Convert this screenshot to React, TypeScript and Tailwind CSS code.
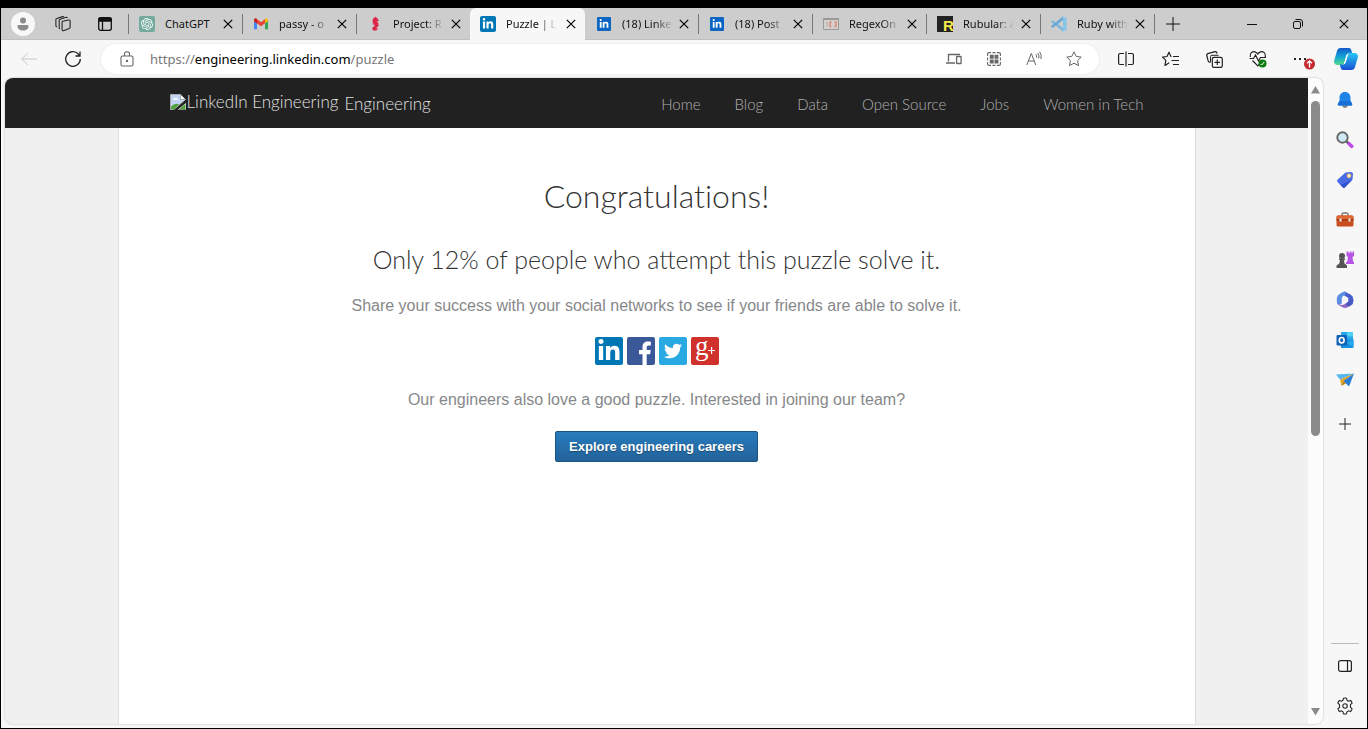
import React from "react";
import { FaLinkedinIn, FaTwitter } from "react-icons/fa";
import { SiOpenai } from "react-icons/si";

type Tab = { title: string; icon: React.ReactNode; active?: boolean };

const LinkedInMark = ({ tone }: { tone: "teal" | "blue" }) => (
  <span
    className={
      tone === "teal"
        ? "flex size-4 items-center justify-center rounded-[2px] bg-[#0077b5] text-white"
        : "flex size-3.5 items-center justify-center rounded-[1px] bg-[#0a66c2] text-white"
    }
  >
    <FaLinkedinIn className={tone === "teal" ? "size-3" : "size-2.5"} />
  </span>
);

const GmailMark = () => (
  <svg viewBox="0 0 16 16" className="size-4">
    <path d="M1 5v8.2h3V7z" fill="#4285f4" />
    <path d="M12 7v6.2h3V5z" fill="#34a853" />
    <path d="M4 7.2 1 5V4c0-1.4 1.5-1.9 2.5-1.2L8 6.2l4.500-3.400L12 7.200 8 10.200z" fill="#ea4335" />
    <path d="M12 7.200 15 5V4c0-1.400-1.500-1.900-2.500-1.200L12 3.200z" fill="#fbbc04" />
    <path d="M1 4v1.200l3 2.200V3.200l-.5-.4C2.500 2.100 1 2.600 1 4z" fill="#c5221f" />
  </svg>
);

const SeahorseMark = () => (
  <svg viewBox="0 0 16 16" className="size-4" fill="#dc2649">
    <path d="M8 .5 9 1.500c1.400.2 2 1.200 1.700 2L12 4.400l-.7.900-2-.3c1.700 1 2.400 2.500 2 4l.9.700-1.300.5c-.5 1-1.400 1.600-2.300 2 .5.300 1 .300 1.400-.1l.8.900c-.8 1.600-3.600 2.200-4.900 1-1-1-.6-2.300.3-3C7.300 10.200 8 9.500 7.700 8.700L5.500 8.500l1-.8-1.300-.9 1.200-.4L5 5.300l1-.3-.7-1.200.9-.2-.3-1.200 1.200-.2z" />
  </svg>
);

const RegexMark = () => (
  <svg viewBox="0 0 16 16" className="size-4" fill="none">
    <path d="M.5 2.500h15v11H.5z" stroke="#999" fill="#d4d0ce" />
    <path d="M.5 3h15" stroke="#999" strokeWidth="2" />
    <path d="m3 6 2 2.300-2 2.200" stroke="#aaa" />
    <path d="M8.500 6H7v4.500h1.500M11.500 6H13v4.500h-1.500" stroke="#dd8a78" strokeWidth="1.400" />
  </svg>
);

const RubularMark = () => (
  <svg viewBox="0 0 16 16" className="size-4">
    <path d="M0 0h16v16H0z" fill="#222" />
    <text x="6" y="15" fontSize="15" fontWeight="700" fontFamily="Liberation Sans Narrow, Liberation Sans, sans-serif" fill="#f4e84c">
      R
    </text>
  </svg>
);

const CodeMark = () => (
  <svg viewBox="0 0 16 16" className="size-4">
    <path d="m.3 5 1.200-1L12 12v3.500L.3 6z" fill="#7fb5da" />
    <path d="m.3 11 1.200 1L12 4V.5L.3 10z" fill="#69a8d3" />
    <path d="M11.500.2 15.500 2v12l-4 1.800-.8-.6L12 14V2L10.700.8z" fill="#88c4e8" />
  </svg>
);

const tabs: Tab[] = [
  {
    title: "ChatGPT",
    icon: (
      <span className="flex size-4 items-center justify-center rounded-[2px] bg-[#74aa9c] text-white">
        <SiOpenai className="size-3" />
      </span>
    ),
  },
  { title: "passy - o", icon: <GmailMark /> },
  { title: "Project: R", icon: <SeahorseMark /> },
  { title: "Puzzle | L", icon: <LinkedInMark tone="teal" />, active: true },
  { title: "(18) Linke", icon: <LinkedInMark tone="blue" /> },
  { title: "(18) Post", icon: <LinkedInMark tone="blue" /> },
  { title: "RegexOn", icon: <RegexMark /> },
  { title: "Rubular: a", icon: <RubularMark /> },
  { title: "Ruby with", icon: <CodeMark /> },
];

const Cross = ({ className }: { className: string }) => (
  <svg viewBox="0 0 10 10" className={className} stroke="currentColor" strokeWidth="1.200">
    <path d="m.8.8 8.400 8.400M9.200.8.8 9.200" />
  </svg>
);

function BrowserTab({ title, icon, active }: Tab) {
  return (
    <div
      className={
        active
          ? "flex h-8 w-[115px] min-w-0 items-center rounded-t-md bg-[#f7f7f7]"
          : "flex h-5 w-[114px] min-w-0 items-center border-l border-[#777] [div.rounded-t-md+&]:w-[113px] [div.rounded-t-md+&]:border-transparent"
      }
    >
      <a href="#tab" className="flex min-w-0 flex-1 items-center gap-2.5 pl-2.5">
        <span className="flex w-4 shrink-0 justify-center">{icon}</span>
        <span
          className={
            title === "ChatGPT"
              ? "flex-1 text-[11px] leading-4 whitespace-nowrap text-[#111]"
              : "w-[54px] shrink-0 -mr-1.5 mask-r-from-60% mask-r-to-95% text-[11px] leading-4 whitespace-nowrap text-[#111]"
          }
        >
          {title}
        </span>
      </a>
      <button aria-label={`Close ${title}`} className="flex w-7 shrink-0 items-center justify-center">
        <Cross className="size-2.5" />
      </button>
    </div>
  );
}

function TabStrip() {
  return (
    <div className="flex h-8 shrink-0 items-center bg-[#cdcdcd] shadow-[inset_0_-1px_0_#c0c0c0]">
      <div className="flex w-[127px] shrink-0 items-center">
        <button aria-label="Profile" className="ml-2.5 flex size-6 items-center justify-center rounded-full bg-[#f8f8f8]">
          <svg viewBox="0 0 12 14" className="h-3.5 w-3" fill="#8a8a8a">
            <circle cx="6" cy="3.500" r="3" />
            <path d="M1.500 8h9q1 0 1 1c0 2.800-2.200 4.500-5.500 4.500S.5 11.800.5 9q0-1 1-1z" />
          </svg>
        </button>
        <button aria-label="Workspaces" className="ml-5 flex size-4 items-center justify-center">
          <svg viewBox="0 0 18 18" className="size-4 overflow-visible" fill="none" stroke="#222" strokeWidth="1.200">
            <path d="m8.500 6 7-1.500q1.500-.2 1.500 1.200v7q0 1-1 1.300l-6.500 2.500Q8 17 8 15.500V7q0-.8.500-1z" />
            <path d="M5.500 14.500q-.8-.3-.8-1.500V5q0-1 1-1.300L12.500 1.500q1.200-.2 1.500.8" />
            <path d="M2.300 12.500Q1 12 1 11V4.200q0-1 1-1.300L8.500.7q1-.2 1.500.6" />
          </svg>
        </button>
        <button aria-label="Tab actions" className="ml-6 flex size-5 items-center justify-center">
          <svg viewBox="0 0 14 14" className="size-3.5" fill="none" stroke="#111" strokeWidth="1.300">
            <rect x=".7" y=".7" width="12.600" height="12.600" rx="2" />
            <path d="M1 1.500h12v2.500H1z" fill="#111" />
            <path d="M4.500 4v9" />
          </svg>
        </button>
      </div>
      <div className="flex min-w-0 items-center">
        {tabs.map((tab) => (
          <BrowserTab key={tab.title} {...tab} />
        ))}
        <button aria-label="New tab" className="flex h-5 w-9 shrink-0 items-center justify-center border-l border-[#777]">
          <svg viewBox="0 0 14 14" className="size-3.5" stroke="#111">
            <path d="M7 0v14M0 7h14" />
          </svg>
        </button>
      </div>
      <div className="ml-auto flex shrink-0">
        <button aria-label="Minimize" className="flex h-8 w-[46px] items-center justify-center">
          <svg viewBox="0 0 10 10" className="size-2.5" stroke="#111">
            <path d="M0 5.500h10" />
          </svg>
        </button>
        <button aria-label="Restore" className="flex h-8 w-[46px] items-center justify-center">
          <svg viewBox="0 0 10 10" className="size-2.5" stroke="#111" fill="none">
            <rect x=".5" y="2.500" width="7" height="7" rx="1.500" />
            <path d="M2.500.5H7Q9.500.5 9.500 3v4.500" />
          </svg>
        </button>
        <button aria-label="Close window" className="flex h-8 w-[46px] items-center justify-center">
          <Cross className="size-2.5" />
        </button>
      </div>
    </div>
  );
}

function AddressBar() {
  return (
    <div className="flex h-[30px] min-w-0 flex-1 items-center rounded-full bg-white pl-[19px] shadow-[0_0_2px_#ddd]">
      <svg viewBox="0 0 14 16" className="h-4 w-3.5 shrink-0" fill="none" stroke="#666" strokeWidth="1.100">
        <rect x="1" y="5" width="12" height="10" rx="1.500" />
        <path d="M4.500 5V3Q4.500.8 7 .8T9.500 3v2" />
        <circle cx="7" cy="10" r=".6" fill="#666" />
      </svg>
      <a href="https://engineering.linkedin.com/puzzle" className="ml-4 flex-1 pt-0.5 text-[13px] text-[#777]">
        https://<span className="text-black">engineering.linkedin.com</span>/puzzle
      </a>
      <div className="mr-[5px] flex text-[#666]">
        <button aria-label="Open app" className="flex w-10 items-center justify-center">
          <svg viewBox="0 0 16 12" className="h-3 w-4" fill="none" stroke="currentColor" strokeWidth="1.300">
            <path d="M14 1.500H2.500v7M0 10h9" />
            <rect x="10.600" y="3.500" width="4.500" height="7" rx=".6" />
          </svg>
        </button>
        <button aria-label="Split apps" className="flex w-10 items-center justify-center">
          <svg viewBox="0 0 14 14" className="size-3.5" fill="none" stroke="currentColor" strokeWidth="1.100">
            <path d="M.6 4V2Q.6.6 2 .6h2M.6 10v2q0 1.400 1.400 1.400h2M13.400 4V2Q13.400.6 12 .6h-2M13.400 10v2q0 1.400-1.400 1.400h-2M5.500.6h3M5.500 13.400h3M.6 5.500v3M13.400 5.500v3" />
            <path d="M2.800 2.800h3.900v3.900H2.800zM7.500 2.800h3.900v3.900H7.500zM2.800 7.500h3.900v3.900H2.800zM7.500 7.500h3.900v3.900H7.500z" fill="currentColor" stroke="none" />
          </svg>
        </button>
        <button aria-label="Read aloud" className="flex w-10 items-center justify-center">
          <svg viewBox="0 0 16 16" className="size-4" fill="none" stroke="currentColor">
            <path d="M.8 14 5.300 2.500 9.800 14M2.400 10h5.800" />
            <path d="M9.800 3.300q1.300 1.500.7 3.400M11.700 2q2 2.500 1 5.500M13.600.8q2.500 3 1.300 7.200" />
          </svg>
        </button>
        <button aria-label="Add to favorites" className="flex w-10 items-center justify-center">
          <svg viewBox="0 0 16 16" className="size-4" fill="none" stroke="currentColor" strokeLinejoin="round">
            <path d="m8 .8 2.200 4.600 5 .7-3.600 3.500.9 5L8 12.200l-4.500 2.400.9-5L.8 6.100l5-.7z" />
          </svg>
        </button>
      </div>
    </div>
  );
}

const toolButton = "relative flex h-8 w-11 items-center justify-center";

function Toolbar() {
  return (
    <div className="flex h-[38px] shrink-0 items-center text-[#222]">
      <div className="flex w-[100px] shrink-0">
        <button aria-label="Back" className="ml-1.5 flex h-8 w-11 items-center justify-center text-[#c8c8c8]">
          <svg viewBox="0 0 16 14" className="h-3.5 w-4" fill="none" stroke="currentColor">
            <path d="M16 7H.8M7 .8.800 7 7 13.200" />
          </svg>
        </button>
        <button aria-label="Refresh" className="flex h-8 w-11 items-center justify-center">
          <svg viewBox="0 0 16 16" className="size-4" fill="none" stroke="currentColor" strokeWidth="1.300">
            <path d="M15.300 8A7.300 7.300 0 1 1 13.500 3.200L15 5M15 .5V5h-4.500" />
          </svg>
        </button>
      </div>
      <AddressBar />
      <div className="ml-[5px] flex shrink-0">
        <button aria-label="Split screen" className={toolButton}>
          <svg viewBox="0 0 16 16" className="size-4" fill="none" stroke="currentColor" strokeWidth="1.200">
            <path d="M6 2.500H2Q.6 2.500.6 4v8q0 1.500 1.400 1.500h4M10 2.500h4q1.400 0 1.400 1.500v8q0 1.500-1.400 1.500h-4M8 .5v15" />
          </svg>
        </button>
        <button aria-label="Favorites" className={toolButton}>
          <svg viewBox="0 0 17 16" className="h-4 w-[17px]" fill="none" stroke="currentColor" strokeWidth="1.200" strokeLinejoin="round">
            <path d="M9.500 5.500h-.6L7 1.200 5 5.500l-4.400.7 3.200 3.200-.8 5 4.200-2.600M11 5.500h6M9.500 9.500H17M11 13.500h6" />
          </svg>
        </button>
        <button aria-label="Collections" className={toolButton}>
          <svg viewBox="0 0 17 17" className="size-[17px]" fill="none" stroke="currentColor" strokeWidth="1.200">
            <path d="M3.800 11.500Q2.500 11 2.200 10L.8 4.500Q.5 3 1.800 2.600L9 .7q1.300-.2 1.700 1l.3 1" />
            <path d="M4.500 11.500V5.800q0-1.500 1.500-1.500h6.500" strokeWidth="1" />
            <rect x="6.300" y="6.300" width="10" height="10" rx="1.600" fill="#f7f7f7" />
            <path d="M11.300 8.500V14M8.500 11.300H14" />
          </svg>
        </button>
        <button aria-label="Browser essentials" className={toolButton}>
          <svg viewBox="0 0 18 18" className="size-[18px]" fill="none" stroke="currentColor" strokeWidth="1.200">
            <path d="M1.300 7C.5 3 3.500 1.200 6 1.800 7.500 2.200 8.500 3.500 8.800 4c.3-.5 1.200-1.800 2.800-2.200C14.200 1.200 17 3 16.300 7M3.500 10.500l5.300 5.300L10 14.500M.5 8.500h4l2-3.500 3 6 2-3.500H17" />
            <circle cx="13.500" cy="13.500" r="4" fill="#107c10" stroke="none" />
            <path d="m11.700 14 1 1 2.500-3" stroke="#fff" strokeWidth="1" />
          </svg>
        </button>
        <button aria-label="Settings and more" className={toolButton}>
          <svg viewBox="0 0 22 18" className="h-[18px] w-[22px] overflow-visible">
            <path d="M3 8h2v2H3zM8 8h2v2H8zM13 8h2v2h-2z" fill="#222" />
            <circle cx="18.500" cy="14" r="5.500" fill="#c42b2f" />
            <path d="M18.500 17.500V11M16 13.300l2.500-2.500 2.500 2.500" fill="none" stroke="#fff" strokeWidth="1.300" />
          </svg>
        </button>
        <button aria-label="Copilot" className="flex h-8 w-[43px] items-center justify-center">
          <svg viewBox="0 0 24 22" className="h-[22px] w-6">
            <defs>
              <linearGradient id="copilotLeft" x2="0" y2="1">
                <stop stopColor="#1458c8" />
                <stop offset=".5" stopColor="#12a3d8" />
                <stop offset="1" stopColor="#53d987" />
              </linearGradient>
              <linearGradient id="copilotRight" x2="0" y2="1">
                <stop stopColor="#28c8f5" />
                <stop offset="1" stopColor="#174fd0" />
              </linearGradient>
            </defs>
            <path d="M3 3Q3.800 0 6.500 0H15q1.800 0 2.300 2l.9 3.500H15q-2 0-2.600 2l-2.200 7.500Q9.600 17 7.500 17H3.500C.8 17-.4 15 .2 12.500z" fill="url(#copilotLeft)" />
            <path d="M21 19Q20.200 22 17.500 22H9q-1.800 0-2.300-2l-.9-3.500H9q2 0 2.600-2L13.800 7Q14.400 5 16.500 5h4c2.700 0 3.900 2 3.300 4.500z" fill="url(#copilotRight)" />
            <path d="M14.200 5.500q-1.300.5-1.800 2l-2.200 7.500q-.3 1-.8 1.500 1.600-.3 2.200-2L13.800 7q.4-1.200 1-1.700z" fill="#fff" />
          </svg>
        </button>
      </div>
    </div>
  );
}

const navItems = ["Home", "Blog", "Data", "Open Source", "Jobs", "Women in Tech"];

const BrokenImage = () => (
  <svg viewBox="0 0 16 16" className="size-4 shrink-0">
    <path d="M.5.5h10l5 5L4 15.500H.5z" fill="#c3d5f5" stroke="#a9a9a9" />
    <path d="M10.500.5v5h5z" fill="#fff" stroke="#a9a9a9" />
    <path d="M3 5.500q.3-1.500 1.700-1.200Q6 2.500 7 4.500q1.500 0 1.200 1.300H3z" fill="#fff" />
    <path d="M1 15v-2.500q4-4 8-2l-5 5z" fill="#4ea23a" />
    <path d="m7 15.500 9-7.500v7.500z" fill="#eee" />
    <path d="m9 15 6.500-5v5z" fill="#4ea23a" />
    <path d="m4.500 16 11.500-9v2L7 16z" fill="#212121" />
  </svg>
);

function SiteHeader() {
  return (
    <header className="bg-[#212121] font-['Lato',sans-serif]">
      <div className="mx-auto flex h-[50px] max-w-[1078px] items-center justify-between px-[52px] pt-0.5">
        <a href="#engineering" className="flex items-center text-[17px] leading-6 font-light text-[#e0e0e0]">
          <span className="flex items-center gap-px pb-1">
            <BrokenImage />
            LinkedIn Engineering
          </span>
          <span className="ml-1.5">Engineering</span>
        </a>
        <nav className="flex gap-[34px] text-[15px] text-[#b0b0b0]">
          {navItems.map((item) => (
            <a key={item} href="#nav" className="font-light">
              {item}
            </a>
          ))}
        </nav>
      </div>
    </header>
  );
}

const shareBox = "flex size-7 items-center justify-center overflow-hidden rounded-[2px] text-white";

function PuzzlePage() {
  return (
    <div className="flex min-w-0 flex-1 flex-col bg-[#f0f0f0]">
      <SiteHeader />
      <main className="mx-auto flex w-full max-w-[1078px] flex-1 flex-col items-center border-x border-[#dcdcdc] bg-white pt-12 text-center font-['Liberation_Sans',Arial,sans-serif] text-base text-[#86888a]">
        <h1 className="font-['Lato',sans-serif] text-[32px] leading-10 font-light text-[#333] [font-variant-ligatures:none]">
          Congratulations!
        </h1>
        <h2 className="mt-[27px] font-['Lato',sans-serif] text-[25px] leading-8 font-light text-[#333]">
          Only 12% of people who attempt this puzzle solve it.
        </h2>
        <p className="mt-[19px]">
          Share your success with your social networks to see if your friends are able to solve it.
        </p>
        <div className="mt-[19px] flex gap-1">
          <a href="#linkedin" aria-label="Share on LinkedIn" className={`${shareBox} bg-[#0077b5]`}>
            <FaLinkedinIn className="size-6" />
          </a>
          <a href="#facebook" aria-label="Share on Facebook" className={`${shareBox} bg-[#3b5998]`}>
            <svg viewBox="0 0 28 28" className="size-7" fill="#fff">
              <path d="M15.500 28V17.200H12V13h3.500V10c0-3.600 2.200-5.500 5.400-5.500 1.500 0 2.600.1 3 .2v3.700h-2.200c-1.700 0-2 .8-2 2V13h4l-.5 4.200h-3.500V28z" />
            </svg>
          </a>
          <a href="#twitter" aria-label="Share on Twitter" className={`${shareBox} bg-[#29a9e1]`}>
            <FaTwitter className="size-[18px]" />
          </a>
          <a href="#google" aria-label="Share on Google+" className={`${shareBox} bg-[#d0312a]`}>
            <svg viewBox="0 0 28 28" className="size-7" fill="#fff">
              <text x="4" y="18" fontSize="27" fontFamily="Liberation Serif, serif">
                g
              </text>
              <path d="M20 10h1.200v2.900H24v1.200h-2.800V17H20v-2.900h-2.800v-1.200H20z" />
            </svg>
          </a>
        </div>
        <p className="mt-[23px]">Our engineers also love a good puzzle. Interested in joining our team?</p>
        <a
          href="#careers"
          className="mt-[19px] rounded-[2px] border border-[#1b5480] bg-linear-to-b from-[#287bbc] to-[#23639a] px-[13px] text-[13px] leading-[29px] font-bold text-white [text-shadow:0_1px_1px_#1b4a72]"
        >
          Explore engineering careers
        </a>
      </main>
    </div>
  );
}

function ScrollBar() {
  return (
    <div className="flex w-[15px] shrink-0 flex-col items-center bg-[#fcfcfc]">
      <svg viewBox="0 0 9 8" className="mt-2 h-2 w-[9px] shrink-0" fill="#8a8a8a">
        <path d="M4.500 0 9 7.500H0z" />
      </svg>
      <div className="mt-[7px] mb-2 w-full flex-1">
        <div className="mx-auto h-[56%] w-[9px] rounded-full bg-[#8b8b8b]" />
      </div>
      <svg viewBox="0 0 9 8" className="mb-2 h-2 w-[9px] shrink-0" fill="#8a8a8a">
        <path d="M4.500 7.500 9 0H0z" />
      </svg>
    </div>
  );
}

const sideIcons: { label: string; art: React.ReactNode }[] = [
  {
    label: "Notifications",
    art: (
      <>
        <path d="M6 14h6q-.5 3-3 3t-3-3z" fill="#888" />
        <path d="M9 1c3.500 0 5.500 2.500 5.500 5.500V10l1.700 3q.3 1.500-1 1.500H2.800q-1.300 0-1-1.500l1.700-3V6.500C3.500 3.500 5.500 1 9 1z" fill="#1f86e8" />
        <path d="m3.500 10-1.700 3q-.3 1.500 1 1.500h12.400q1.300 0 1-1.500l-1.700-3z" fill="#176fd6" />
      </>
    ),
  },
  {
    label: "Search",
    art: (
      <>
        <path d="m10.500 12.500 2.300-2.300 4.700 4.300q.5 1.500-.7 2.300-1 .8-2 .200z" fill="#c04be8" />
        <path d="m10 10 2 2" stroke="#555" strokeWidth="2" />
        <circle cx="6.500" cy="6.500" r="5.200" fill="#cfeaf5" stroke="#666" strokeWidth="1.900" />
      </>
    ),
  },
  {
    label: "Shopping",
    art: (
      <>
        <path d="M9.500 1.500 15 1q2 0 2 2l-.5 5.500L9 16.300q-1.200 1.200-2.400 0L1.500 11Q.4 9.900 1.500 8.800z" fill="#4c6be8" />
        <path d="M16.500 8.500 9 16.300q-1.200 1.200-2.400 0L4.500 14z" fill="#3154cc" />
        <circle cx="13" cy="4.800" r="1.800" fill="#fff" stroke="#edbd5c" strokeWidth="1.200" />
      </>
    ),
  },
  {
    label: "Tools",
    art: (
      <>
        <path d="M6 5V3.500Q6 2 7.500 2h3Q12 2 12 3.500V5" fill="none" stroke="#777" strokeWidth="1.400" />
        <rect x=".5" y="4.500" width="17" height="11" rx="1.500" fill="#c94f20" />
        <path d="M.5 8.500h17V6q0-1.500-1.500-1.500H2Q.5 4.500.5 6z" fill="#e0662f" />
        <path d="M.5 8.300h17v1.200H.5z" fill="#8c3213" />
        <path d="M3.500 7.500h2v3h-2zM12.500 7.500h2v3h-2z" fill="#eee" />
      </>
    ),
  },
  {
    label: "Games",
    art: (
      <>
        <path d="M10.500.5h2V2h1.200V.5h1.800V2h1V.5H18V5l-1.500 1 .5 4 1 1.500V13h-8v-1.500L11.500 10l.5-4-1.500-1z" fill="#b755e6" />
        <circle cx="6" cy="5" r="3" fill="#555" />
        <path d="M3 7.500h6v1.500H8l.5 3.500 2.500 2V17H.5v-2.500l2.800-2L4 9H3z" fill="#555" />
      </>
    ),
  },
  {
    label: "Microsoft 365",
    art: (
      <>
        <path d="M8.500.5 14.500 3.500q2.800 1.500 2.800 4.500v2.500L12.500 8.500V7L7.500 4z" fill="#4560cc" />
        <path d="M9.500.5Q8 .3 6 1.500L3.500 3Q.8 4.600.8 7.500V11q0 2.500 2 3l3-1.500V7.500q0-1.500 1.200-2.500L9.500 3.500z" fill="#5b8de0" />
        <path d="M1.500 12.500q.5 1 2 2l3 1.800q2.500 1.400 5 0l3.500-2q2.300-1.400 2.300-4.300L12.500 8v2.500L9 13q-3 1.500-5.500.5z" fill="#8c68ca" />
        <path d="M12.500 7.500v3L9.500 13l3 2.800 2.500-1.500q2.300-1.400 2.300-4.300V9z" fill="#4a58c4" />
      </>
    ),
  },
  {
    label: "Outlook",
    art: (
      <>
        <path d="M5 1h12v9H5z" fill="#28a8ea" />
        <path d="M11 1h6v4.500h-6z" fill="#50d0f5" />
        <path d="M4 8.500h13.500V16q0 1-1 1H5z" fill="#1490df" />
        <path d="m10 12 7.500-3.500V16z" fill="#28a8ea" />
        <rect x=".5" y="4" width="10.500" height="10.500" rx="1" fill="#0f62b5" />
        <ellipse cx="5.700" cy="9.200" rx="2.400" ry="2.700" fill="none" stroke="#fff" strokeWidth="1.600" />
      </>
    ),
  },
  {
    label: "Drop",
    art: (
      <>
        <path d="M0 3.500 18 2.500 4 8.500z" fill="#52b7ee" />
        <path d="M18 2.500 4 8.500l1.500 6.500L7.500 10.500z" fill="#e2a52d" />
        <path d="M18 2.500 7.500 10 13 15.500z" fill="#2b7cd4" />
        <path d="m5.500 15 2-5 2.500 2.300z" fill="#b87f16" />
      </>
    ),
  },
];

function SideBar() {
  return (
    <aside className="flex w-11 shrink-0 flex-col items-center pt-0.5 pb-0.5">
      {sideIcons.map(({ label, art }) => (
        <button key={label} aria-label={label} className="flex h-10 w-full items-center justify-center">
          <svg viewBox="0 0 18 18" className="size-[18px]">
            {art}
          </svg>
        </button>
      ))}
      <button aria-label="Customize" className="mt-1 flex h-10 w-full items-center justify-center">
        <svg viewBox="0 0 12 12" className="size-3" stroke="#222">
          <path d="M6 0v12M0 6h12" />
        </svg>
      </button>
      <div className="mt-auto w-7 border-t border-[#bbb]" />
      <button aria-label="Hide sidebar" className="mt-0.5 flex h-10 w-full items-center justify-center">
        <svg viewBox="0 0 14 12" className="h-3 w-3.5" fill="none" stroke="#222" strokeWidth="1.200">
          <rect x=".6" y=".6" width="12.800" height="10.800" rx="2" />
          <path d="M9.500.6v10.800" />
        </svg>
      </button>
      <button aria-label="Settings" className="flex h-10 w-full items-center justify-center">
        <svg viewBox="0 0 20 20" className="size-[18px]" fill="none" stroke="#222" strokeWidth="1.200" strokeLinejoin="round">
          <circle cx="10" cy="10" r="2.500" />
          <path d="M8.300 1.300q1.700-.4 3.400 0l.5 2.300q.9.400 1.700 1l2.300-.8q1.200 1.300 1.700 3l-1.800 1.700v3l1.800 1.700q-.5 1.700-1.700 3l-2.300-.8q-.8.600-1.700 1l-.5 2.300q-1.700.4-3.400 0l-.5-2.300q-.9-.4-1.700-1l-2.300.8q-1.200-1.300-1.700-3l1.800-1.700v-3L2.100 6.800q.5-1.700 1.700-3l2.300.8q.8-.6 1.700-1z" />
        </svg>
      </button>
    </aside>
  );
}

export default function App() {
  return (
    <div className="flex h-screen flex-col overflow-hidden border-x border-t-8 border-b border-black bg-[#f7f7f7] font-['Noto_Sans','Open_Sans',sans-serif]">
      <TabStrip />
      <Toolbar />
      <div className="flex min-h-0 flex-1">
        <div className="mb-1 ml-1 flex min-w-0 flex-1 overflow-hidden rounded-lg shadow-[0_0_2px_#aaa]">
          <PuzzlePage />
          <ScrollBar />
        </div>
        <SideBar />
      </div>
    </div>
  );
}
